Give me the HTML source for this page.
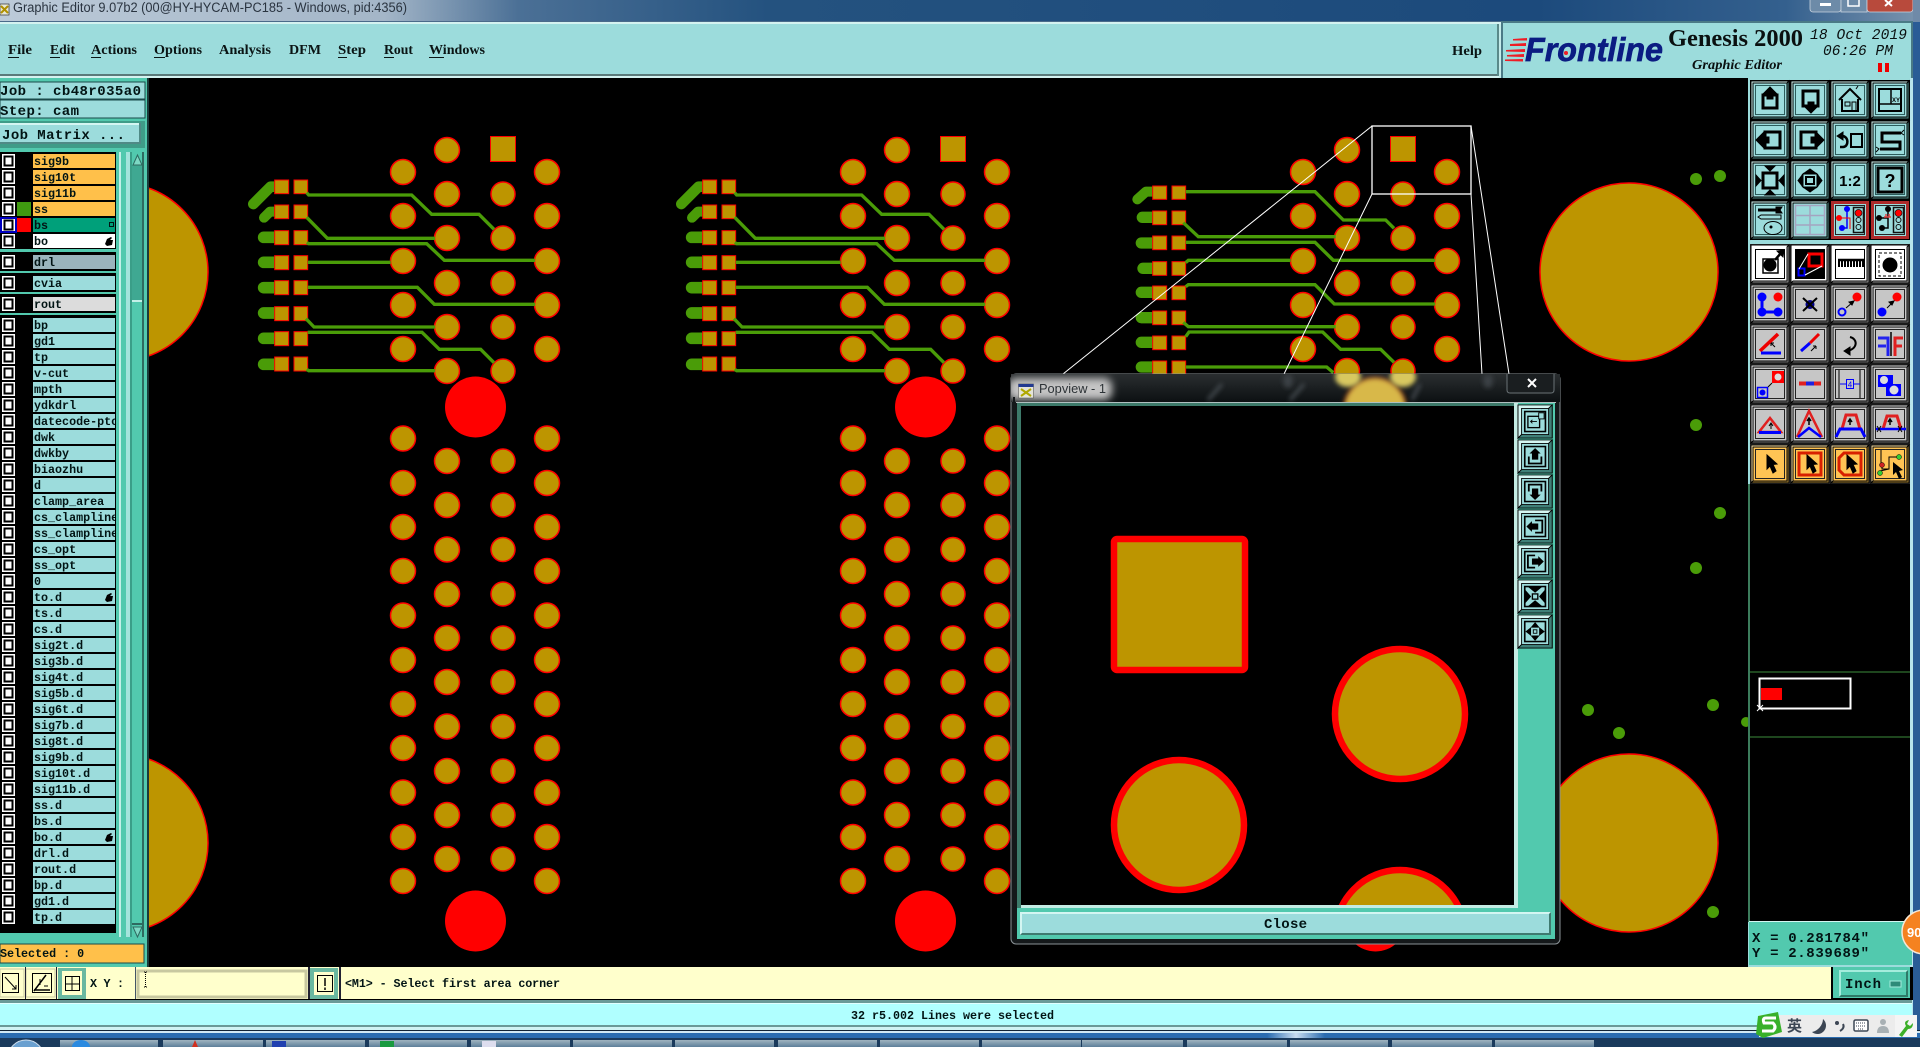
<!DOCTYPE html>
<html><head><meta charset="utf-8"><title>Graphic Editor</title>
<style>
html,body{margin:0;padding:0;background:#000;overflow:hidden;width:1920px;height:1047px}
svg{display:block}
text{white-space:pre}
.m{font:bold 11.7px "Liberation Mono",monospace;fill:#021414}
.l{font:bold 14px "Liberation Mono",monospace;fill:#021414}
.s{font:bold 14px "Liberation Serif",serif;fill:#0a1414}
</style></head><body>
<svg xmlns="http://www.w3.org/2000/svg" width="1920" height="1047" viewBox="0 0 1920 1047">
<defs>
<linearGradient id="tg" x1="0" x2="1" y1="0" y2="0"><stop offset="0" stop-color="#bccad8"/><stop offset=".2" stop-color="#a4b6c8"/><stop offset=".27" stop-color="#4b7096"/><stop offset=".4" stop-color="#24527f"/><stop offset=".8" stop-color="#1c4a7c"/><stop offset=".93" stop-color="#34608e"/><stop offset="1" stop-color="#7a94ae"/></linearGradient>
<linearGradient id="gl" x1="0" x2="0" y1="0" y2="1"><stop offset="0" stop-color="#2a2e30"/><stop offset="1" stop-color="#0c1012"/></linearGradient>
<linearGradient id="tb" x1="0" x2="0" y1="0" y2="1"><stop offset="0" stop-color="#a0b4c0"/><stop offset="1" stop-color="#5d7f9a"/></linearGradient>
<linearGradient id="bar" x1="0" x2="1" y1="0" y2="0"><stop offset="0" stop-color="#2a6cb0"/><stop offset=".66" stop-color="#2a6cb0"/><stop offset=".675" stop-color="#c8dcf0"/><stop offset=".69" stop-color="#2a6cb0"/><stop offset="1" stop-color="#2a6cb0"/></linearGradient>
<filter id="b2" x="-40%" y="-40%" width="180%" height="180%"><feGaussianBlur stdDeviation="2.5"/></filter>
<filter id="b6" x="-40%" y="-60%" width="180%" height="220%"><feGaussianBlur stdDeviation="4"/></filter>
<clipPath id="lc"><rect x="33" y="150" width="82" height="790"/></clipPath>
<clipPath id="pc"><rect x="1021" y="406" width="493" height="499"/></clipPath>
<clipPath id="wc"><rect x="1011" y="374" width="549" height="28"/></clipPath>

<g id="bT"><rect width="38" height="38" fill="#9cdcdc"/><path d="M0 0H38L36 2H2V36L0 38Z" fill="#d4f6f2"/><path d="M38 0V38H0L2 36H36V2Z" fill="#4f8a86"/><rect x="4.5" y="4.5" width="29" height="29" fill="none" stroke="#2c5c5c"/></g>
<g id="bP"><rect width="38" height="38" fill="#9cdcdc"/><path d="M0 0H38L34 4H4V34L0 38Z" fill="#d4f6f2"/><path d="M38 0V38H0L4 34H34V4Z" fill="#3f8078"/><rect x="7.500" y="7.500" width="23" height="23" fill="none" stroke="#000" stroke-width="1.800"/></g>
<g id="bG"><rect width="38" height="38" fill="#c6c6c6"/><path d="M0 0H38L36 2H2V36L0 38Z" fill="#eee"/><path d="M38 0V38H0L2 36H36V2Z" fill="#777"/><rect x="4.5" y="4.5" width="29" height="29" fill="none" stroke="#222"/></g>
<g id="bW"><rect width="38" height="38" fill="#fff"/><path d="M38 0V38H0L2 36H36V2Z" fill="#999"/><rect x="4.5" y="4.5" width="29" height="29" fill="none" stroke="#000"/></g>
<g id="bY"><rect width="38" height="38" fill="#ffc454"/><path d="M0 0H38L36 2H2V36L0 38Z" fill="#ffe6a8"/><path d="M38 0V38H0L2 36H36V2Z" fill="#9c7a30"/><rect x="4.5" y="4.5" width="29" height="29" fill="none" stroke="#222"/></g>
<g id="bR"><rect width="38" height="38" fill="#9cdcdc"/><rect x="1.5" y="1.5" width="35" height="35" fill="none" stroke="#ad2a2a" stroke-width="3"/><rect x="4.5" y="4.5" width="29" height="29" fill="none" stroke="#222"/></g>
<g id="tl"><rect x="22.5" y="6.5" width="10" height="25" fill="none" stroke="#111" stroke-width="1.5"/><circle cx="27.5" cy="12" r="3.5" fill="#f00" stroke="#111" stroke-width=".7"/><circle cx="27.5" cy="19" r="2.5" fill="none" stroke="#111"/><circle cx="27.5" cy="26" r="2.5" fill="none" stroke="#111"/></g>
<polygon id="cur" points="16,10 16,24 19,21 22,28 25,26 22,19.500 26,19" fill="#000"/>

<g id="row"><rect x="2" y="0" width="13" height="14" fill="#fff"/><rect x="4.500" y="2.500" width="8" height="9" fill="#fff" stroke="#000" stroke-width="2"/></g>
<polygon id="hand" points="0,7 2,2 6,0 7,1 5,3 8,3 7,8 2,9" fill="#000"/>

<circle id="p" r="12.500" fill="#bd9500" stroke="#f00" stroke-width="1.500"/>
<circle id="q" r="12" fill="#bd9500" stroke="#f00" stroke-width="1.500"/>
<g id="colA"><use href="#p" y="172"/><use href="#p" y="216"/><use href="#p" y="261"/><use href="#p" y="305"/><use href="#p" y="349"/><use href="#p" y="438.500"/><use href="#p" y="483"/><use href="#p" y="527"/><use href="#p" y="571"/><use href="#p" y="615.500"/><use href="#p" y="660"/><use href="#p" y="704"/><use href="#p" y="748"/><use href="#p" y="792.500"/><use href="#p" y="837"/><use href="#p" y="881"/></g>
<g id="colB"><use href="#p" y="150"/><use href="#p" y="194"/><use href="#p" y="238"/><use href="#p" y="283"/><use href="#p" y="327"/><use href="#p" y="371"/><use href="#p" y="461"/><use href="#p" y="505"/><use href="#p" y="549.500"/><use href="#p" y="594"/><use href="#p" y="638"/><use href="#p" y="682"/><use href="#p" y="726.500"/><use href="#p" y="771"/><use href="#p" y="815"/><use href="#p" y="859"/></g>
<g id="colC"><rect x="-12.500" y="136.500" width="25" height="25" fill="#bd9500" stroke="#f00" stroke-width="1"/><use href="#q" y="194"/><use href="#q" y="238"/><use href="#q" y="283"/><use href="#q" y="327"/><use href="#q" y="371"/><use href="#q" y="461"/><use href="#q" y="505"/><use href="#q" y="549.500"/><use href="#q" y="594"/><use href="#q" y="638"/><use href="#q" y="682"/><use href="#q" y="726.500"/><use href="#q" y="771"/><use href="#q" y="815"/><use href="#q" y="859"/></g>
<g id="grp"><use href="#colA" x="403"/><use href="#colB" x="447"/><use href="#colC" x="503"/><use href="#colA" x="547"/><circle cx="475.500" cy="407" r="30.500" fill="#f00"/><circle cx="475.500" cy="921" r="30.500" fill="#f00"/></g>

<g id="smd" fill="#bd9500" stroke="#f00" stroke-width="3">
<rect x="104" y="150" width="42" height="41"/><rect x="162" y="150" width="41" height="41"/>
<rect x="104" y="225" width="42" height="41"/><rect x="162" y="225" width="41" height="41"/>
<rect x="104" y="302" width="42" height="42"/><rect x="162" y="302" width="41" height="42"/>
<rect x="104" y="377" width="42" height="42"/><rect x="162" y="377" width="41" height="42"/>
<rect x="104" y="452" width="42" height="42"/><rect x="162" y="452" width="41" height="42"/>
<rect x="104" y="530" width="42" height="42"/><rect x="162" y="530" width="41" height="42"/>
<rect x="104" y="605" width="42" height="42"/><rect x="162" y="605" width="41" height="42"/>
<rect x="104" y="681" width="42" height="42"/><rect x="162" y="681" width="41" height="42"/>
</g>
<g id="st1">
<g fill="none" stroke="#4a9c08" stroke-linecap="round" stroke-linejoin="round">
<path d="M103 170H92L40 222" stroke-width="32"/>
<path d="M103 245H90L72 263" stroke-width="30"/>
<path d="M71 322H110M71 397H110M71 473H110M71 549H110M71 625H110M71 703H110" stroke-width="35"/>
</g>
<use href="#smd"/>
</g>
</defs>

<!-- canvas -->
<rect width="1920" height="1047" fill="#000"/>
<g fill="#bd9500" stroke="#f00" stroke-width="1.500">
<circle cx="119" cy="272" r="89"/><circle cx="119" cy="843" r="89"/>
<circle cx="1629" cy="272" r="89"/><circle cx="1629" cy="843" r="89"/>
</g>
<use href="#grp"/>
<g transform="translate(240 130) scale(.33333)">
<use href="#st1"/>
<g fill="none" stroke="#4a9c08" stroke-width="10">
<path d="M200 188L206 195H515L575 253H717L762 298"/>
<path d="M200 262L262 325H585"/>
<path d="M200 338L206 341H560L613 391H885"/>
<path d="M203 397H452"/>
<path d="M203 472H532L583 523H885"/>
<path d="M198 566L222 591H585"/>
<path d="M203 607H546L598 658H722L762 698"/>
<path d="M200 718L206 722H585"/>
</g>
</g>
<g transform="translate(450 0)"><use href="#grp"/></g>
<g transform="translate(690 130) scale(.33333)">
<g transform="translate(-66 0)"><use href="#st1"/></g>
<g fill="none" stroke="#4a9c08" stroke-width="10">
<path d="M134 188L140 195H515L575 253H717L762 298"/>
<path d="M134 262L196 325H585"/>
<path d="M134 338L140 341H560L613 391H885"/>
<path d="M137 397H452"/>
<path d="M137 472H532L583 523H885"/>
<path d="M132 566L156 591H585"/>
<path d="M137 607H546L598 658H722L762 698"/>
<path d="M134 718L140 722H585"/>
</g>
</g>
<g transform="translate(900 0)"><use href="#grp"/></g>
<g transform="translate(1120 120) scale(.33333)">
<g fill="none" stroke="#4a9c08" stroke-linecap="round" stroke-linejoin="round">
<path d="M97 215H78L52 238" stroke-width="30"/>
<path d="M67 292H105M64 369H105M69 445H105M64 517H105M64 593H105M64 667H105M64 741H105" stroke-width="34"/>
</g>
<g fill="#bd9500" stroke="#f00" stroke-width="3">
<rect x="98" y="198" width="42" height="40"/><rect x="156" y="198" width="41" height="40"/>
<rect x="98" y="273" width="42" height="41"/><rect x="156" y="273" width="41" height="41"/>
<rect x="98" y="348" width="42" height="41"/><rect x="156" y="348" width="41" height="41"/>
<rect x="98" y="425" width="42" height="41"/><rect x="156" y="425" width="41" height="41"/>
<rect x="98" y="498" width="42" height="41"/><rect x="156" y="498" width="41" height="41"/>
<rect x="98" y="573" width="42" height="41"/><rect x="156" y="573" width="41" height="41"/>
<rect x="98" y="648" width="42" height="41"/><rect x="156" y="648" width="41" height="41"/>
<rect x="98" y="723" width="42" height="41"/><rect x="156" y="723" width="41" height="41"/>
</g>
<g fill="none" stroke="#4a9c08" stroke-width="10">
<path d="M197 215H585L670 300H797L822 325"/>
<path d="M190 308L235 350H647"/>
<path d="M197 367H585L640 421H945"/>
<path d="M197 428L205 421H512"/>
<path d="M197 500L205 494H585L643 552H945"/>
<path d="M190 607L205 620H647"/>
<path d="M197 650L207 636H608L662 688H782L822 727"/>
<path d="M197 741H620L640 758"/>
</g>
</g>
<g fill="#4a9c08"><circle cx="1696" cy="179" r="6"/><circle cx="1720" cy="176" r="6"/><circle cx="1696" cy="425" r="6"/><circle cx="1720" cy="513" r="6"/><circle cx="1696" cy="568" r="6"/><circle cx="1588" cy="710" r="6"/><circle cx="1619" cy="733" r="6"/><circle cx="1713" cy="705" r="6"/><circle cx="1713" cy="912" r="6"/><circle cx="1746" cy="722" r="5"/></g>
<!-- selection rubber band -->
<g fill="none" stroke="#fff" stroke-width="1">
<rect x="1372" y="126" width="99" height="68" stroke-width="1.300"/>
<path d="M1372 126L1063 374M1372 194L1284 374M1471 126L1509 374M1471 194L1482 374"/>
</g>

<!-- top title -->
<rect width="1920" height="22" fill="url(#tg)"/>
<rect x="0" y="4" width="9" height="11" fill="#e8e8d8" stroke="#333" stroke-width=".7"/>
<path d="M1 6L8 13M8 6L1 13" stroke="#b09000" stroke-width="2"/>
<text x="13" y="12" font-family="Liberation Sans,sans-serif" font-size="13.500" fill="#2a3440" textLength="394" lengthAdjust="spacingAndGlyphs">Graphic Editor 9.07b2 (00@HY-HYCAM-PC185 - Windows, pid:4356)</text>
<g>
<rect x="1810" y="-3" width="31" height="15" rx="3" fill="#6d8ba8" stroke="#c8d4e0" stroke-width=".8"/>
<rect x="1841" y="-3" width="26" height="15" fill="#6d8ba8" stroke="#c8d4e0" stroke-width=".8"/>
<rect x="1867" y="-3" width="46" height="15" rx="3" fill="#b84a3c" stroke="#c8d4e0" stroke-width=".8"/>
<rect x="1820" y="3" width="11" height="3" fill="#fff"/><rect x="1848" y="-1" width="11" height="7" fill="none" stroke="#fff" stroke-width="1.500"/>
<path d="M1885 0L1892 6M1892 0L1885 6" stroke="#fff" stroke-width="2"/>
</g>
<rect y="21" width="1920" height="1" fill="#4a6a8a"/>
<rect y="22" width="1920" height="2" fill="#d4f2f0"/>

<!-- menubar -->
<rect y="24" width="1497" height="50" fill="#9cdcdc"/>
<rect y="74" width="1497" height="2" fill="#5a7a7a"/>
<rect y="76" width="1920" height="2" fill="#d4f2f0"/>
<rect x="1497" y="24" width="2" height="52" fill="#5a8a8a"/>
<rect x="1499" y="24" width="2" height="54" fill="#c4ecea"/>
<rect x="1501" y="21" width="412" height="57" fill="#9cdcdc"/>
<rect x="1501" y="21" width="412" height="2" fill="#4a7a86"/>
<rect x="1501" y="21" width="2" height="57" fill="#4a7a86"/>
<rect x="1911" y="21" width="2" height="57" fill="#4a7a86"/>
<g class="s">
<text class="s" x="8" y="54" textLength="24" lengthAdjust="spacingAndGlyphs">File</text>
<text class="s" x="50" y="54" textLength="25" lengthAdjust="spacingAndGlyphs">Edit</text>
<text class="s" x="91" y="54" textLength="46" lengthAdjust="spacingAndGlyphs">Actions</text>
<text class="s" x="154" y="54" textLength="48" lengthAdjust="spacingAndGlyphs">Options</text>
<text class="s" x="219" y="54" textLength="52" lengthAdjust="spacingAndGlyphs">Analysis</text>
<text class="s" x="289" y="54" textLength="32" lengthAdjust="spacingAndGlyphs">DFM</text>
<text class="s" x="338" y="54" textLength="28" lengthAdjust="spacingAndGlyphs">Step</text>
<text class="s" x="384" y="54" textLength="29" lengthAdjust="spacingAndGlyphs">Rout</text>
<text class="s" x="429" y="54" textLength="56" lengthAdjust="spacingAndGlyphs">Windows</text>
<text class="s" x="1452" y="55" textLength="30" lengthAdjust="spacingAndGlyphs">Help</text>
</g>
<path d="M8 57.500H19M50 57.500H60M91 57.500H101M154 57.500H165M338 57.500H347M384 57.500H394M429 57.500H444" stroke="#0a1414" stroke-width="1"/>
<!-- logo -->
<g fill="#ee1c25"><polygon points="1513,39 1527,38 1527,40.500 1513,40.500"/><polygon points="1510,44 1526,43 1526,46 1510,46"/><polygon points="1506,50 1525,49 1525,52 1506,51.500"/><polygon points="1507,55 1524,54 1524,57 1507,56.500"/><polygon points="1505,59.500 1523,59 1523,61.500 1505,61"/></g>
<text x="1525" y="61" font-family="Liberation Sans,sans-serif" font-weight="bold" font-style="italic" font-size="33" fill="#0b1c82" stroke="#0b1c82" stroke-width=".7" textLength="138" lengthAdjust="spacingAndGlyphs">Frontline</text>
<circle cx="1566" cy="53" r="2" fill="#ee1c25"/>
<text x="1668" y="46" font-family="Liberation Serif,serif" font-weight="bold" font-size="24" fill="#0a1010" textLength="135" lengthAdjust="spacingAndGlyphs">Genesis 2000</text>
<text x="1692" y="69" font-family="Liberation Serif,serif" font-weight="bold" font-style="italic" font-size="14" fill="#0a1010" textLength="90" lengthAdjust="spacingAndGlyphs">Graphic Editor</text>
<text x="1810" y="39" font-family="Liberation Mono,monospace" font-style="italic" font-size="14.500" fill="#0a1010" textLength="97">18 Oct 2019</text>
<text x="1823" y="55" font-family="Liberation Mono,monospace" font-style="italic" font-size="14.500" fill="#0a1010" textLength="70">06:26 PM</text>
<rect x="1878" y="63" width="4" height="9" fill="#e00"/><rect x="1885" y="63" width="4" height="9" fill="#e00"/>

<!-- left panel -->
<rect y="78" width="148" height="889" fill="#52c9ae"/>
<rect x="147" y="78" width="2" height="889" fill="#1a3a3a"/>
<rect y="82" width="145" height="17" fill="#9cdcdc" stroke="#1a4a4a" stroke-width="1"/>
<rect y="100" width="145" height="18" fill="#9cdcdc" stroke="#1a4a4a" stroke-width="1"/>
<text class="l" x="0" y="95" textLength="141">Job : cb48r035a0</text>
<text class="l" x="0" y="115" textLength="79">Step: cam</text>
<rect y="121" width="145" height="27" fill="#3f9c88"/>
<rect y="123" width="141" height="21" fill="#9cdcdc"/>
<rect y="123" width="141" height="2" fill="#d4f6f2"/><rect x="139" y="123" width="2" height="21" fill="#4f8a86"/><rect y="142" width="141" height="2" fill="#4f8a86"/>
<text class="l" x="2" y="139" textLength="123">Job Matrix ...</text>
<rect y="152" width="117" height="785" fill="#000"/>
<!-- scroll stripes -->
<rect x="116" y="152" width="3" height="785" fill="#52c9ae"/>
<rect x="119" y="152" width="2" height="785" fill="#c4f0e8"/>
<rect x="121" y="152" width="5" height="785" fill="#52c9ae"/>
<rect x="126" y="152" width="4" height="785" fill="#a4e4dc"/>
<rect x="130" y="152" width="2" height="785" fill="#3a9e88"/>
<rect x="132" y="152" width="10" height="785" fill="#52c9ae"/>
<rect x="132" y="165" width="10" height="135" fill="#3fa892"/>
<rect x="142" y="152" width="2" height="785" fill="#2e6a60"/>
<rect x="132" y="300" width="10" height="625" fill="#52c9ae"/>
<rect x="132" y="300" width="10" height="2" fill="#c4f0e8"/>
<rect x="132" y="923" width="10" height="2" fill="#2e6a60"/>
<path d="M137.500 155L133 165H142Z" fill="#7dd8c4" stroke="#2e6a60"/>
<path d="M137.500 937L133 927H142Z" fill="#7dd8c4" stroke="#2e6a60"/>
<!-- teal gaps between framed rows -->
<rect y="249" width="116" height="3" fill="#52c9ae"/>
<rect y="271" width="116" height="2" fill="#52c9ae"/>
<rect y="292" width="116" height="2" fill="#52c9ae"/>
<rect y="313" width="116" height="2" fill="#52c9ae"/>
<rect y="933" width="116" height="4" fill="#52c9ae"/>
<g fill="#9cdcdc">
<rect x="33" y="154" width="82" height="14" fill="#ffc04a"/><rect x="33" y="170" width="82" height="14" fill="#ffc04a"/><rect x="33" y="186" width="82" height="14" fill="#ffc04a"/><rect x="33" y="202" width="82" height="14" fill="#ffc04a"/>
<rect x="33" y="218" width="82" height="14" fill="#00a07a"/><rect x="33" y="234" width="82" height="14" fill="#fff"/>
<rect x="33" y="255" width="82" height="14" fill="#9ab4bc"/><rect x="33" y="276" width="82" height="14"/><rect x="33" y="297" width="82" height="14" fill="#dcdcdc"/>
<rect x="33" y="318" width="82" height="14"/><rect x="33" y="334" width="82" height="14"/><rect x="33" y="350" width="82" height="14"/><rect x="33" y="366" width="82" height="14"/><rect x="33" y="382" width="82" height="14"/><rect x="33" y="398" width="82" height="14"/><rect x="33" y="414" width="82" height="14"/><rect x="33" y="430" width="82" height="14"/><rect x="33" y="446" width="82" height="14"/><rect x="33" y="462" width="82" height="14"/><rect x="33" y="478" width="82" height="14"/><rect x="33" y="494" width="82" height="14"/><rect x="33" y="510" width="82" height="14"/><rect x="33" y="526" width="82" height="14"/><rect x="33" y="542" width="82" height="14"/><rect x="33" y="558" width="82" height="14"/><rect x="33" y="574" width="82" height="14"/><rect x="33" y="590" width="82" height="14"/><rect x="33" y="606" width="82" height="14"/><rect x="33" y="622" width="82" height="14"/><rect x="33" y="638" width="82" height="14"/><rect x="33" y="654" width="82" height="14"/><rect x="33" y="670" width="82" height="14"/><rect x="33" y="686" width="82" height="14"/><rect x="33" y="702" width="82" height="14"/><rect x="33" y="718" width="82" height="14"/><rect x="33" y="734" width="82" height="14"/><rect x="33" y="750" width="82" height="14"/><rect x="33" y="766" width="82" height="14"/><rect x="33" y="782" width="82" height="14"/><rect x="33" y="798" width="82" height="14"/><rect x="33" y="814" width="82" height="14"/><rect x="33" y="830" width="82" height="14"/><rect x="33" y="846" width="82" height="14"/><rect x="33" y="862" width="82" height="14"/><rect x="33" y="878" width="82" height="14"/><rect x="33" y="894" width="82" height="14"/><rect x="33" y="910" width="82" height="14"/>
</g>
<rect x="17" y="202" width="14" height="14" fill="#3f9a10"/><rect x="17" y="218" width="14" height="14" fill="#f00"/>
<use href="#row" y="154"/><use href="#row" y="170"/><use href="#row" y="186"/><use href="#row" y="202"/><use href="#row" y="218"/><use href="#row" y="234"/><use href="#row" y="255"/><use href="#row" y="276"/><use href="#row" y="297"/><use href="#row" y="318"/><use href="#row" y="334"/><use href="#row" y="350"/><use href="#row" y="366"/><use href="#row" y="382"/><use href="#row" y="398"/><use href="#row" y="414"/><use href="#row" y="430"/><use href="#row" y="446"/><use href="#row" y="462"/><use href="#row" y="478"/><use href="#row" y="494"/><use href="#row" y="510"/><use href="#row" y="526"/><use href="#row" y="542"/><use href="#row" y="558"/><use href="#row" y="574"/><use href="#row" y="590"/><use href="#row" y="606"/><use href="#row" y="622"/><use href="#row" y="638"/><use href="#row" y="654"/><use href="#row" y="670"/><use href="#row" y="686"/><use href="#row" y="702"/><use href="#row" y="718"/><use href="#row" y="734"/><use href="#row" y="750"/><use href="#row" y="766"/><use href="#row" y="782"/><use href="#row" y="798"/><use href="#row" y="814"/><use href="#row" y="830"/><use href="#row" y="846"/><use href="#row" y="862"/><use href="#row" y="878"/><use href="#row" y="894"/><use href="#row" y="910"/>
<rect x="1" y="218" width="15" height="14" fill="none" stroke="#0000c0" stroke-width="2"/>
<g clip-path="url(#lc)">
<text class="m" x="34" y="165">sig9b</text><text class="m" x="34" y="181">sig10t</text><text class="m" x="34" y="197">sig11b</text><text class="m" x="34" y="213">ss</text><text class="m" x="34" y="229">bs</text><text class="m" x="34" y="245">bo</text>
<text class="m" x="34" y="266">drl</text><text class="m" x="34" y="287">cvia</text><text class="m" x="34" y="308">rout</text>
<text class="m" x="34" y="329">bp</text><text class="m" x="34" y="345">gd1</text><text class="m" x="34" y="361">tp</text><text class="m" x="34" y="377">v-cut</text><text class="m" x="34" y="393">mpth</text><text class="m" x="34" y="409">ydkdrl</text><text class="m" x="34" y="425">datecode-ptc</text><text class="m" x="34" y="441">dwk</text><text class="m" x="34" y="457">dwkby</text><text class="m" x="34" y="473">biaozhu</text><text class="m" x="34" y="489">d</text><text class="m" x="34" y="505">clamp_area</text><text class="m" x="34" y="521">cs_clampline</text><text class="m" x="34" y="537">ss_clampline</text><text class="m" x="34" y="553">cs_opt</text><text class="m" x="34" y="569">ss_opt</text><text class="m" x="34" y="585">0</text><text class="m" x="34" y="601">to.d</text><text class="m" x="34" y="617">ts.d</text><text class="m" x="34" y="633">cs.d</text><text class="m" x="34" y="649">sig2t.d</text><text class="m" x="34" y="665">sig3b.d</text><text class="m" x="34" y="681">sig4t.d</text><text class="m" x="34" y="697">sig5b.d</text><text class="m" x="34" y="713">sig6t.d</text><text class="m" x="34" y="729">sig7b.d</text><text class="m" x="34" y="745">sig8t.d</text><text class="m" x="34" y="761">sig9b.d</text><text class="m" x="34" y="777">sig10t.d</text><text class="m" x="34" y="793">sig11b.d</text><text class="m" x="34" y="809">ss.d</text><text class="m" x="34" y="825">bs.d</text><text class="m" x="34" y="841">bo.d</text><text class="m" x="34" y="857">drl.d</text><text class="m" x="34" y="873">rout.d</text><text class="m" x="34" y="889">bp.d</text><text class="m" x="34" y="905">gd1.d</text><text class="m" x="34" y="921">tp.d</text>
</g>
<use href="#hand" x="105" y="237"/><use href="#hand" x="105" y="593"/><use href="#hand" x="105" y="833"/>
<rect x="109.500" y="222.500" width="4" height="4" fill="none" stroke="#021414"/>
<rect y="944" width="144" height="19" fill="#ffc04a" stroke="#1a4a4a" stroke-width="1"/>
<text class="m" x="0" y="957">Selected : 0</text>

<!-- right panel -->
<rect x="1748" y="78" width="165" height="890" fill="#9cdcdc"/>
<rect x="1750" y="80" width="160" height="160" fill="#000"/>
<rect x="1750" y="244" width="160" height="240" fill="#333"/>
<rect x="1750" y="484" width="160" height="438" fill="#000"/>
<rect x="1748" y="484" width="2" height="438" fill="#3c7c5c"/>
<rect x="1750" y="671.500" width="160" height="1" fill="#3c8c3c"/><rect x="1750" y="736.500" width="160" height="1" fill="#3c8c3c"/>
<rect x="1759.500" y="678.500" width="91" height="30" fill="none" stroke="#fff" stroke-width="2"/>
<rect x="1761" y="688" width="21" height="12" fill="#f00"/>
<path d="M1757 705L1763 711M1763 705L1757 711" stroke="#fff"/>
<rect x="1910" y="78" width="3" height="944" fill="#b8e4ec"/>
<rect x="1913" y="0" width="7" height="1047" fill="#2a5c96"/>
<rect x="1913" y="0" width="7" height="22" fill="#6f8aa8"/>

<!-- toolbar group 1 -->
<g fill="none" stroke="#000">
<g transform="translate(1751 81)"><use href="#bT"/><rect x="12" y="14" width="14" height="13" stroke-width="3"/><polygon points="19,6 25,12 22,12 22,18 16,18 16,12 13,12" fill="#000"/></g>
<g transform="translate(1791 81)"><use href="#bT"/><rect x="12" y="10" width="15" height="15" stroke-width="3"/><polygon points="20,32 26,26 23,26 23,21 17,21 17,26 14,26" fill="#000"/></g>
<g transform="translate(1831 81)"><use href="#bT"/><path d="M8 19L19 8L30 19M11 18V30H27V18" stroke-width="2"/><rect x="14" y="21" width="5" height="4" stroke-width="1"/><rect x="21" y="21" width="4" height="9" stroke-width="1"/><path d="M25 8L27 5" stroke-width="1"/></g>
<g transform="translate(1871 81)"><use href="#bT"/><rect x="8" y="8" width="22" height="22" stroke-width="2"/><path d="M8 23H30M20 8V23" stroke-width="1.500"/><text x="21" y="21" font-size="6" font-family="Liberation Sans" font-weight="bold" fill="#000" stroke="none">XY</text></g>

<g transform="translate(1751 121)"><use href="#bT"/><rect x="14" y="11" width="15" height="16" stroke-width="3"/><polygon points="5,19 12,12 12,16 18,16 18,22 12,22 12,26" fill="#000"/></g>
<g transform="translate(1791 121)"><use href="#bT"/><rect x="10" y="11" width="15" height="16" stroke-width="3"/><polygon points="33,19 26,12 26,16 20,16 20,22 26,22 26,26" fill="#000"/></g>
<g transform="translate(1831 121)"><use href="#bT"/><rect x="20" y="13" width="11" height="13" stroke-width="2"/><path d="M9 26H12C18 26 18 15 11 15" stroke-width="2.500"/><polygon points="6,15 12,11 12,19" fill="#000"/></g>
<g transform="translate(1871 121)"><use href="#bT"/><path d="M30 12H11V21H29V28H9" stroke-width="3"/><path d="M33 9L30 12L33 14M5 26L8 28L5 31" stroke-width="1"/></g>

<g transform="translate(1751 161)"><use href="#bT"/><rect x="12" y="12" width="14" height="15" stroke-width="3"/><polygon points="14,5 24,5 19,10 " fill="#000"/><polygon points="14,34 24,34 19,29" fill="#000"/><polygon points="5,14 5,25 10,19.500" fill="#000"/><polygon points="33,14 33,25 28,19.500" fill="#000"/></g>
<g transform="translate(1791 161)"><use href="#bT"/><rect x="15" y="16" width="8" height="7" stroke-width="2"/><polygon points="19,8 26,13 12,13" fill="#000"/><polygon points="19,31 12,26 26,26" fill="#000"/><polygon points="7,19.500 12,13 12,26" fill="#000"/><polygon points="31,19.500 26,13 26,26" fill="#000"/></g>
<g transform="translate(1831 161)"><use href="#bT"/><text x="19" y="25" text-anchor="middle" font-family="Liberation Sans" font-weight="bold" font-size="15" fill="#000" stroke="none">1:2</text></g>
<g transform="translate(1871 161)"><use href="#bT"/><rect x="7" y="7" width="24" height="24" stroke-width="3"/><text x="19" y="26" text-anchor="middle" font-family="Liberation Sans" font-weight="bold" font-size="18" fill="#000" stroke="none">?</text></g>

<g transform="translate(1751 201)"><use href="#bT"/><path d="M7 9H26" stroke-width="3"/><path d="M25 6H31L29 9L31 12H25Z" fill="#000"/><path d="M7 16L10 14H30V18H10Z" stroke-width="1"/><ellipse cx="22" cy="27" rx="9" ry="6.500" stroke-width="1"/><circle cx="20" cy="26" r="1" fill="#000"/></g>
<g transform="translate(1791 201)"><use href="#bT"/><path d="M4.500 4.500H33.500V33.500H4.500ZM19 5V33M5 14.500H33M5 24H33" stroke="#a4a4c0" stroke-width="1.500"/></g>
<g transform="translate(1831 201)"><use href="#bR"/><use href="#tl"/><path d="M16 8V27H11" stroke="#00f" stroke-width="1.500"/><path d="M8 17H19V28" stroke="#f00" stroke-width="1"/><circle cx="16" cy="8" r="3" fill="#00f" stroke="none"/><circle cx="8" cy="17" r="3" fill="#f00" stroke="none"/><circle cx="11" cy="27" r="3" fill="#00f" stroke="none"/></g>
<g transform="translate(1871 201)"><use href="#bR"/><use href="#tl"/><path d="M17 8V17M8 17H17V27H11" stroke="#000" stroke-width="1.500"/><path d="M13 16H20M15 13V16M18 13V16" stroke="#d44" stroke-width="1.500"/><circle cx="17" cy="8" r="3" fill="#000" stroke="none"/><circle cx="8" cy="17" r="3" fill="#000" stroke="none"/><circle cx="11" cy="27" r="3" fill="#000" stroke="none"/></g>

<!-- toolbar group 2 -->
<g transform="translate(1751 245)"><use href="#bW"/><rect x="12" y="14" width="15" height="14" stroke-width="1.500"/><circle cx="19" cy="20" r="6" fill="#000"/><path d="M24 15L30 8" stroke-width="2.500"/><polygon points="33,5 26,6 32,12" fill="#000"/></g>
<g transform="translate(1791 245)"><use href="#bW"/><rect x="5" y="5" width="28" height="28" fill="#000"/><rect x="18" y="9" width="13" height="12" stroke="#f00" stroke-width="3"/><rect x="7.500" y="23.500" width="6" height="7" stroke="#00f" stroke-width="2"/><path d="M17 9L8 24M31 21L14 30" stroke="#fff"/></g>
<g transform="translate(1831 245)"><use href="#bW"/><path d="M7 15H33" stroke-width="2.500"/><path d="M7 19H33" stroke-width="6" stroke-dasharray="2 1"/></g>
<g transform="translate(1871 245)"><use href="#bW"/><rect x="8" y="8" width="22" height="23" stroke-dasharray="3 2"/><circle cx="19" cy="20" r="7" fill="#000"/></g>

<g transform="translate(1751 285)"><use href="#bG"/><path d="M11 12V27H27" stroke="#00f" stroke-width="3"/><circle cx="11" cy="12" r="4.500" fill="#00f" stroke="none"/><circle cx="11" cy="27" r="4.500" fill="#00f" stroke="none"/><circle cx="27" cy="27" r="4.500" fill="#00f" stroke="none"/><circle cx="27" cy="12" r="4.500" fill="#f00" stroke="none"/></g>
<g transform="translate(1791 285)"><use href="#bG"/><circle cx="19" cy="19.500" r="4.500" fill="#00008b" stroke="none"/><path d="M12 13L26 26M26 13L12 26" stroke-width="2"/></g>
<g transform="translate(1831 285)"><use href="#bG"/><circle cx="26" cy="12" r="4.500" fill="#f00" stroke="none"/><circle cx="11" cy="27" r="3.500" fill="none" stroke="#00f" stroke-width="2"/><path d="M15 23L22 17" stroke-width="1"/><polygon points="23,16 18,17 21,20" fill="#000"/></g>
<g transform="translate(1871 285)"><use href="#bG"/><circle cx="26" cy="12" r="4.500" fill="#f00" stroke="none"/><circle cx="11" cy="27" r="4.500" fill="#00f" stroke="none"/><path d="M16 23L22 17" stroke-width="1"/><polygon points="23,16 18,17 21,20" fill="#000"/></g>

<g transform="translate(1751 325)"><use href="#bG"/><path d="M9 26L27 9" stroke="#e00" stroke-width="3.500"/><path d="M10 28H30" stroke="#00f" stroke-width="3"/><path d="M24 22L20 18M20 18V21M20 18H23" stroke-width="1"/></g>
<g transform="translate(1791 325)"><use href="#bG"/><path d="M10 26L19 18" stroke="#00f" stroke-width="3"/><path d="M19 18L28 9" stroke="#e00" stroke-width="3"/><path d="M20 26L25 21M25 21H22M25 21V24" stroke-width="1"/></g>
<g transform="translate(1831 325)"><use href="#bG"/><path d="M19 12C27 14 27 24 16 26" stroke-width="2"/><polygon points="13,26 19,22 19,30" fill="#000"/></g>
<g transform="translate(1871 325)"><use href="#bG"/><path d="M7 13H17V31M7 21H15" stroke="#2222ee" stroke-width="3"/><path d="M20 7V31" stroke-width="1.500"/><path d="M24 31V13H32M24 21H31" stroke="#e02020" stroke-width="3"/></g>

<g transform="translate(1751 365)"><use href="#bG"/><rect x="21" y="6" width="12" height="12" fill="#f00" stroke="none"/><circle cx="27" cy="12" r="3.500" fill="#ddd" stroke="none"/><rect x="6.500" y="22.500" width="10" height="10" stroke="#00f" stroke-width="1.500"/><circle cx="11.500" cy="27.500" r="3" fill="#00f" stroke="none"/><path d="M17 22L21 18" stroke-width="1"/></g>
<g transform="translate(1791 365)"><use href="#bG"/><path d="M8 18.500H30" stroke="#e02020" stroke-width="4"/><path d="M15 18.500H23" stroke="#2020e0" stroke-width="4"/></g>
<g transform="translate(1831 365)"><use href="#bG"/><path d="M8 5V33M29 5V33" stroke-width="1"/><path d="M9 19H15M23 19H29" stroke="#00f"/><rect x="15.500" y="14.500" width="7" height="9" stroke="#00f"/><text x="19" y="22.500" text-anchor="middle" font-size="8" font-family="Liberation Sans" fill="#00f" stroke="none">4</text></g>
<g transform="translate(1871 365)"><use href="#bG"/><path d="M7 10H22V19H30V31H15V22H7Z" fill="#00f" stroke="none"/><circle cx="13" cy="15" r="4" fill="#ddd" stroke="none"/><circle cx="23" cy="25" r="4.500" fill="#ddd" stroke="none"/></g>

<g transform="translate(1751 405)"><use href="#bG"/><path d="M19 13L8 27H30Z" stroke="#e02020" stroke-width="2.500"/><path d="M8 27.500H30" stroke="#00f" stroke-width="3"/><path d="M20 24V19M18 21L20 18L22 21" stroke-width="1"/></g>
<g transform="translate(1791 405)"><use href="#bG"/><path d="M6 32L18 6L31 32" stroke="#e02020" stroke-width="2.500"/><path d="M7 32L18 23L30 32" stroke="#00f" stroke-width="2.500"/><path d="M18 20V14M16 16L18 13L20 16" stroke-width="1.500"/></g>
<g transform="translate(1831 405)"><use href="#bG"/><path d="M11 24L15 10H25L29 24" stroke="#e02020" stroke-width="3"/><path d="M5 32L9 24H30L34 32" stroke="#00f" stroke-width="3"/><path d="M19 20V15M17 17L19 14L21 17" stroke-width="1.500"/></g>
<g transform="translate(1871 405)"><use href="#bG"/><path d="M12 24L16 11H26L30 24" stroke="#e02020" stroke-width="3"/><path d="M5 24H35" stroke="#00f" stroke-width="2.500"/><path d="M19 20V15M17 17L19 14L21 17" stroke-width="1.500"/><path d="M6 21L10 27M10 21L6 27M27 21L31 27M31 21L27 27" stroke-width="1"/></g>

<g transform="translate(1751 445)"><use href="#bY"/><use href="#cur"/></g>
<g transform="translate(1791 445)"><use href="#bY"/><rect x="8" y="8" width="22" height="22" stroke="#d82000" stroke-width="3"/><use href="#cur"/></g>
<g transform="translate(1831 445)"><use href="#bY"/><path d="M13 8H30V30H13L8 25V13Z" stroke="#d82000" stroke-width="3"/><use href="#cur"/></g>
<g transform="translate(1871 445)"><use href="#bY"/><path d="M10 5V18M11 21V24H18V12H26M9 26L18 24" stroke-width="1"/><circle cx="11" cy="20" r="2.500" fill="#c22" stroke="#000" stroke-width=".5"/><circle cx="28" cy="12" r="2.500" fill="#3c3" stroke="#000" stroke-width=".5"/><circle cx="9" cy="28" r="2.500" fill="#3c3" stroke="#000" stroke-width=".5"/><polygon points="22,17 22,30 25,27 28,34 31,32 28,26 32,25" fill="#000" stroke="none"/></g>
</g>

<!-- coord readout -->
<rect x="1749" y="922" width="163" height="43" fill="#52c9ae"/>
<rect x="1749" y="921" width="163" height="1" fill="#d4f6f2"/>
<text class="l" x="1752" y="942" textLength="117">X = 0.281784"</text>
<text class="l" x="1752" y="957" textLength="117">Y = 2.839689"</text>

<!-- bottom command bar -->
<rect y="967" width="1912" height="32" fill="#ffffcc"/>
<rect y="999" width="1912" height="1" fill="#000"/>
<rect y="1000" width="1912" height="3" fill="#6a9a98"/>
<rect y="1003" width="1912" height="22" fill="#b0ffff"/>
<rect y="1003" width="1912" height="1" fill="#e0ffff"/>
<rect y="1025" width="1912" height="2" fill="#6a9a98"/>
<rect y="1027" width="1912" height="3" fill="#d0f4f4"/>
<rect y="1030" width="1920" height="1" fill="#123"/>
<rect y="1031" width="1920" height="2" fill="#d0e8f4"/>
<rect y="1033" width="1920" height="5" fill="url(#bar)"/>
<rect y="1038" width="1920" height="9" fill="#1a3a5c"/>
<g fill="url(#tb)">
<rect x="60" y="1040" width="98" height="7"/><rect x="163" y="1040" width="100" height="7"/><rect x="266" y="1040" width="99" height="7"/><rect x="369" y="1040" width="98" height="7"/><rect x="471" y="1040" width="99" height="7"/><rect x="573" y="1040" width="99" height="7"/><rect x="675" y="1040" width="99" height="7"/><rect x="778" y="1040" width="99" height="7"/><rect x="880" y="1040" width="99" height="7"/><rect x="982" y="1040" width="99" height="7"/><rect x="1082" y="1040" width="101" height="7"/><rect x="1187" y="1040" width="100" height="7"/><rect x="1290" y="1040" width="98" height="7"/><rect x="1392" y="1040" width="100" height="7"/><rect x="1495" y="1040" width="99" height="7"/>
</g>
<circle cx="26" cy="1058" r="18" fill="#6aa0d0" stroke="#cde" stroke-width="1"/>
<path d="M72 1047a9 7 0 0 1 18 0Z" fill="#2a8ae0"/><path d="M192 1047l3-7 3 7Z" fill="#d03020"/><rect x="272" y="1041" width="14" height="6" fill="#2040b0"/><rect x="380" y="1041" width="14" height="6" fill="#1a9a40"/><rect x="482" y="1041" width="14" height="6" fill="#dde"/>

<!-- bottom controls -->
<g fill="none" stroke="#000">
<rect x="0" y="969" width="24" height="28" fill="#ffffcc" stroke="#c8c8a0"/>
<rect x="2.500" y="973.500" width="16" height="19" stroke="#000"/>
<path d="M5 977L16 989M12 989H16V985" stroke-width="1"/>
<rect x="26" y="969" width="29" height="28" fill="#ffffcc" stroke="#c8c8a0"/>
<rect x="32.500" y="973.500" width="19" height="19" stroke="#000" stroke-width="1"/>
<path d="M34 991L46 975M34 990H50" stroke-width="1.500"/><path d="M40 979V985M44 986h4" stroke-width="1"/>
<rect x="58" y="968" width="28" height="31" fill="#6ab8a0" stroke="none"/>
<rect x="62" y="971" width="20" height="24" fill="#ffffcc" stroke="none"/>
<rect x="65.500" y="976.500" width="14" height="14" stroke-width="1"/><path d="M66 984H79M72 977V990" stroke-width="1"/>
<rect x="25" y="967" width="1" height="32" fill="#223" stroke="none"/><rect x="56" y="967" width="1" height="32" fill="#223" stroke="none"/>
<rect x="87" y="967" width="1" height="32" fill="#ffffcc" stroke="none"/>
<rect x="135" y="967" width="1" height="32" fill="#456" stroke="none"/>
<rect x="138" y="971" width="168" height="26" fill="#ffffcc" stroke="#c8c8a0" stroke-width="3"/>
<path d="M144 972H147M145.500 972V987M144 987H147" stroke-width="1" stroke-dasharray="1 1"/>
<rect x="308" y="967" width="2" height="32" fill="#223" stroke="none"/>
<rect x="310" y="968" width="28" height="31" fill="#6ab8a0" stroke="none"/>
<rect x="314" y="972" width="20" height="23" fill="#ffffcc" stroke="none"/>
<rect x="317.500" y="975.500" width="15" height="16" stroke-width="1"/>
<path d="M325 978V986M325 987.500V990" stroke-width="1.500"/>
<rect x="339" y="967" width="2" height="32" fill="#223" stroke="none"/>
</g>
<text class="m" x="90" y="987" textLength="34">X Y :</text>
<text class="m" x="345" y="987" textLength="215">&lt;M1&gt; - Select first area corner</text>
<rect x="1831" y="967" width="2" height="33" fill="#000"/>
<rect x="1833" y="967" width="79" height="33" fill="#52c9ae"/>
<rect x="1910" y="967" width="3" height="33" fill="#000"/>
<rect x="1833" y="998" width="79" height="2" fill="#000"/>
<rect x="1839" y="970" width="69" height="27" fill="#52c9ae"/>
<path d="M1839 970H1908L1906 972H1841V995L1839 997Z" fill="#a4ecdc"/>
<path d="M1908 970V997H1839L1841 995H1906V972Z" fill="#2e7a68"/>
<text class="l" x="1845" y="988" textLength="36">Inch</text>
<rect x="1890" y="981" width="11" height="6" fill="#2e8a78" stroke="#a4ecdc" stroke-width="1"/>
<text class="m" x="851" y="1019" textLength="203">32 r5.002 Lines were selected</text>

<!-- IME bar -->
<rect x="1759" y="1015" width="158" height="22" fill="#ececec"/>
<rect x="1895" y="1015" width="22" height="22" fill="#f4f4f4"/>
<path d="M1758 1016L1778 1012L1782 1032L1763 1038L1756 1034Z" fill="#38b02a"/>
<path d="M1776 1018H1766Q1762 1018 1764 1023H1773Q1777 1027 1773 1031H1762" fill="none" stroke="#fff" stroke-width="3"/>
<text x="1787" y="1031" font-family="Noto Sans CJK SC,sans-serif" font-weight="bold" font-size="15" fill="#3c4654">英</text>
<path d="M1823 1019A8.500 8.500 0 0 1 1812 1032A14 14 0 0 0 1823 1019Z" fill="#3c4654"/>
<circle cx="1837" cy="1023" r="2" fill="#3c4654"/><path d="M1843 1024Q1845 1028 1840 1031" stroke="#3c4654" stroke-width="2" fill="none"/>
<rect x="1854" y="1020" width="14" height="11" rx="1.500" fill="#fff" stroke="#3c4654" stroke-width="1.500"/><path d="M1856 1023h10M1856 1026h10M1858 1029h6" stroke="#3c4654" stroke-dasharray="1 1"/>
<circle cx="1883" cy="1022" r="3" fill="#a8b0b4"/><path d="M1877 1033Q1877 1026 1883 1026Q1889 1026 1889 1033Z" fill="#a8b0b4"/>
<path d="M1899 1035L1906 1026Q1903 1021 1909 1020L1907 1024L1910 1026L1913 1023Q1913 1029 1908 1029L1902 1037Z" fill="#3cb028"/>

<!-- orange badge -->
<circle cx="1924" cy="932" r="22" fill="#f58220" stroke="#f4e8d8" stroke-width="1.500"/>
<text x="1907" y="937" font-family="Liberation Sans,sans-serif" font-weight="bold" font-size="13" fill="#fff">90</text>

<!-- popup window glass -->
<rect x="1011" y="374" width="549" height="570" rx="5" fill="#14181a" stroke="#8a9296" stroke-width="1"/>
<g clip-path="url(#wc)">
<rect x="1011" y="374" width="549" height="28" fill="url(#gl)"/>
<ellipse cx="1375" cy="410" rx="31" ry="32" fill="#d8b848" stroke="#b23a10" stroke-width="2" filter="url(#b2)"/>
<ellipse cx="1348" cy="377" rx="13" ry="10" fill="#d8c860" filter="url(#b2)"/>
<ellipse cx="1403" cy="377" rx="13" ry="10" fill="#d8c860" filter="url(#b2)"/>
<rect x="1008" y="378" width="104" height="22" rx="8" fill="#c4c4c4" filter="url(#b6)"/>
<path d="M1208 400L1222 384M1290 400L1304 384M1412 400L1420 384" stroke="#4a5054" stroke-width="3" filter="url(#b2)"/>
<ellipse cx="1288" cy="381" rx="5" ry="7" fill="#3a4044" filter="url(#b2)"/><ellipse cx="1488" cy="381" rx="5" ry="7" fill="#3a4044" filter="url(#b2)"/>
</g>
<rect x="1013" y="397" width="2" height="6" fill="#14181a"/>
<path d="M1507 374V390Q1507 393 1510 393H1551Q1554 393 1554 390V374" fill="#1a1e20" stroke="#6a7276"/>
<path d="M1528 379L1536 387M1536 379L1528 387" stroke="#fff" stroke-width="2"/>
<rect x="1018.500" y="384" width="15" height="14" fill="#e4e4d8" stroke="#444" stroke-width=".5"/><rect x="1018.500" y="384" width="15" height="3" fill="#223a90"/>
<path d="M1021 389L1031 396M1031 389L1021 396" stroke="#b0a800" stroke-width="2"/>
<text x="1039" y="393" font-family="Liberation Sans,sans-serif" font-size="12.500" fill="#2c3236" textLength="67" lengthAdjust="spacingAndGlyphs">Popview - 1</text>
<rect x="1016" y="402" width="540" height="1" fill="#b0c0c0"/>
<rect x="1017" y="403" width="538" height="536" fill="#52c9ae"/>
<rect x="1017" y="403" width="501" height="3" fill="#3d7a6a"/><rect x="1017" y="403" width="4" height="505" fill="#3d7a6a"/>
<rect x="1021" y="406" width="493" height="499" fill="#000"/>
<rect x="1514" y="403" width="4" height="505" fill="#c4ece4"/>
<rect x="1021" y="905" width="497" height="3" fill="#c4ece4"/>
<g clip-path="url(#pc)" stroke="#f00" stroke-width="6.500" fill="#bd9500">
<rect x="1114" y="539" width="131" height="131" rx="3"/>
<circle cx="1400" cy="714" r="65"/><circle cx="1179" cy="825" r="65"/><circle cx="1400" cy="935" r="65"/>
</g>
<!-- popup side buttons -->
<g fill="none" stroke="#000">
<g transform="translate(1518 405) scale(.9 .87)"><use href="#bP"/><rect x="11" y="13" width="13" height="13" stroke-width="1.500"/><path d="M21 19H14M16 17L14 19L16 21" stroke-width="1"/><rect x="23" y="9" width="6" height="7" fill="#9cdcdc" stroke-width="1"/></g>
<g transform="translate(1518 440) scale(.9 .87)"><use href="#bP"/><path d="M12 19V27H26V19" stroke-width="2"/><polygon points="19,10 24,15 22,15 22,22 16,22 16,15 14,15" fill="#000"/></g>
<g transform="translate(1518 475) scale(.9 .87)"><use href="#bP"/><path d="M12 19V11H26V19" stroke-width="2"/><polygon points="19,28 24,23 22,23 22,16 16,16 16,23 14,23" fill="#000"/></g>
<g transform="translate(1518 510) scale(.9 .87)"><use href="#bP"/><path d="M19 12H27V26H19" stroke-width="2"/><polygon points="10,19 15,14 15,16 22,16 22,22 15,22 15,24" fill="#000"/></g>
<g transform="translate(1518 545) scale(.9 .87)"><use href="#bP"/><path d="M19 12H11V26H19" stroke-width="2"/><polygon points="28,19 23,14 23,16 16,16 16,22 23,22 23,24" fill="#000"/></g>
<g transform="translate(1518 580) scale(.9 .87)"><use href="#bP"/><rect x="16" y="16" width="6" height="6" stroke-width="1.500"/><polygon points="12,8 26,8 19,14" fill="#000"/><polygon points="12,30 26,30 19,24" fill="#000"/><polygon points="8,12 8,26 14,19" fill="#000"/><polygon points="30,12 30,26 24,19" fill="#000"/></g>
<g transform="translate(1518 615) scale(.9 .87)"><use href="#bP"/><rect x="17" y="17" width="4" height="4" stroke-width="1"/><polygon points="19,9 23,14 15,14" fill="#000"/><polygon points="19,29 15,24 23,24" fill="#000"/><polygon points="9,19 14,15 14,23" fill="#000"/><polygon points="29,19 24,15 24,23" fill="#000"/></g>
</g>
<!-- close -->
<rect x="1020" y="912" width="531" height="23" fill="#9cdcdc"/>
<path d="M1020 912H1551L1549 914H1022V933L1020 935Z" fill="#d4f6f2"/>
<path d="M1551 912V935H1020L1022 933H1549V914Z" fill="#3f7a70"/>
<text class="l" x="1264" y="928" textLength="43">Close</text>
</svg>
</body></html>
